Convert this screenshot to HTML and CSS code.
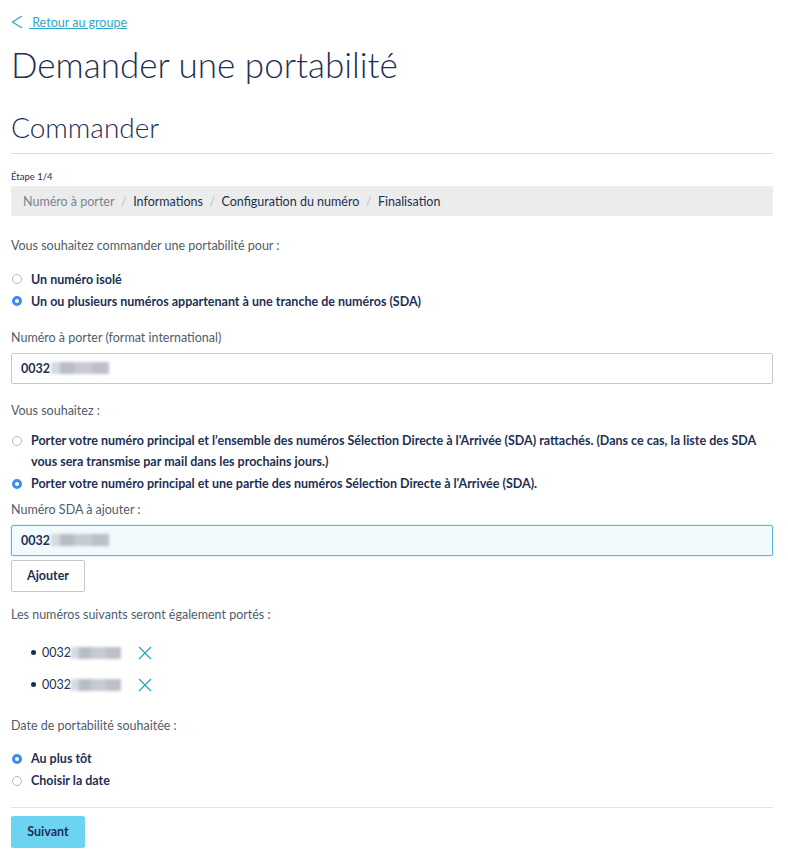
FILE: index.html
```html
<!DOCTYPE html>
<html lang="fr">
<head>
<meta charset="utf-8">
<title>Demander une portabilité</title>
<link rel="stylesheet" href="styles.css">
</head>
<body>
<main class="page">
  <a class="back" href="#">
    <svg class="back-icon" width="12" height="14" viewBox="0 0 12 14"><path d="M11 1 L1.5 7 L11 13" fill="none" stroke="#2ea8c8" stroke-width="1.3"/></svg>
    <span class="back-text">&nbsp;Retour au groupe</span>
  </a>
  <h1 class="title">Demander une portabilité</h1>
  <h2 class="subtitle">Commander</h2>

  <div class="step">Étape 1/4</div>
  <nav class="crumbs">
    <span class="crumb current">Numéro à porter</span>
    <span class="sep">/</span>
    <span class="crumb">Informations</span>
    <span class="sep">/</span>
    <span class="crumb">Configuration du numéro</span>
    <span class="sep">/</span>
    <span class="crumb">Finalisation</span>
  </nav>

  <p class="label q1">Vous souhaitez commander une portabilité pour :</p>
  <div class="radios r1">
    <div class="radio"><span class="dot"></span><span class="rtext">Un numéro isolé</span></div>
    <div class="radio"><span class="dot on"></span><span class="rtext">Un ou plusieurs numéros appartenant à une tranche de numéros (SDA)</span></div>
  </div>

  <p class="label q2">Numéro à porter (format international)</p>
  <div class="input"><span class="val">0032</span><span class="blur"></span></div>

  <p class="label q3">Vous souhaitez :</p>
  <div class="radios r2">
    <div class="radio"><span class="dot"></span><span class="rtext">Porter votre numéro principal et l’ensemble des numéros Sélection Directe à l'Arrivée (SDA) rattachés. (Dans ce cas, la liste des SDA vous sera transmise par mail dans les prochains jours.)</span></div>
    <div class="radio"><span class="dot on"></span><span class="rtext">Porter votre numéro principal et une partie des numéros Sélection Directe à l'Arrivée (SDA).</span></div>
  </div>

  <p class="label q4">Numéro SDA à ajouter :</p>
  <div class="input focus"><span class="val">0032</span><span class="blur"></span></div>
  <button class="btn">Ajouter</button>

  <p class="label q5">Les numéros suivants seront également portés :</p>
  <ul class="nums">
    <li class="num"><span class="bullet"></span><span class="ntext">0032</span><span class="blur small"></span>
      <svg class="x" width="14" height="14" viewBox="0 0 14 14"><path d="M1 1 L13 13 M13 1 L1 13" stroke="#2ea8c8" stroke-width="1.4" fill="none"/></svg></li>
    <li class="num"><span class="bullet"></span><span class="ntext">0032</span><span class="blur small"></span>
      <svg class="x" width="14" height="14" viewBox="0 0 14 14"><path d="M1 1 L13 13 M13 1 L1 13" stroke="#2ea8c8" stroke-width="1.4" fill="none"/></svg></li>
  </ul>

  <p class="label q6">Date de portabilité souhaitée :</p>
  <div class="radios r3">
    <div class="radio"><span class="dot on"></span><span class="rtext">Au plus tôt</span></div>
    <div class="radio"><span class="dot"></span><span class="rtext">Choisir la date</span></div>
  </div>

  <hr class="rule">
  <button class="btn primary">Suivant</button>
</main>
</body>
</html>
```

FILE: styles.css
```css
* { box-sizing: border-box; }
html, body { margin: 0; padding: 0; background: #fff; }
body {
  font-family: Lato, "Noto Sans", sans-serif;
  color: #1c3055;
  font-size: 13px;
}
.page {
  padding: 12px 15px 0 11px;
  display: flex;
  flex-direction: column;
}
.back {
  display: flex;
  align-items: center;
  gap: 6px;
  color: #2ea8c8;
  text-decoration: none;
  height: 20px;
  align-self: flex-start;
}
.back-text {
  text-decoration: underline;
  font-size: 12.5px;
}
.title {
  margin: 10px 0 0;
  font-weight: 300;
  font-size: 35px;
  line-height: 44px;
  color: #1c3055;
}
.subtitle {
  margin: 23px 0 0;
  font-weight: 300;
  font-size: 28px;
  line-height: 36px;
  color: #1c3055;
  padding-bottom: 8px;
  border-bottom: 1px solid #d8dcdf;
}
.step {
  margin-top: 17px;
  font-size: 9.5px;
  line-height: 12px;
}
.crumbs {
  margin-top: 3px;
  height: 30px;
  background: #ebeceb;
  border-radius: 2px;
  display: flex;
  align-items: center;
  padding-left: 12px;
  gap: 6.5px;
  font-size: 12.5px;
}
.crumb { color: #1c3055; }
.crumb.current { color: #7a8591; }
.sep { color: #c0c4c8; }
.label {
  margin: 0;
  color: #4f5d6b;
  font-size: 12.5px;
  line-height: 16px;
}
.q1 { margin-top: 22px; }
.q2 { margin-top: 18px; }
.q3 { margin-top: 19px; }
.q4 { margin-top: 7.5px; }
.q5 { margin-top: 15px; }
.q6 { margin-top: 23px; }
.radios { display: flex; flex-direction: column; gap: 1px; }
.r1 { margin-top: 14.5px; }
.r2 { margin-top: 11.5px; }
.r3 { margin-top: 14.5px; }
.radio {
  display: flex;
  align-items: flex-start;
  gap: 9px;
  font-weight: 700;
  font-size: 12.5px;
  line-height: 21px;
}
.dot {
  flex: none;
  width: 10px;
  height: 10px;
  margin-top: 5.5px;
  margin-left: 1px;
  border-radius: 50%;
  border: 1px solid #b5b8bc;
  background: #fff;
}
.dot.on {
  border: 3px solid #3d8bf0;
  background: #fff;
}
.input {
  margin-top: 7px;
  height: 31px;
  border: 1px solid #c6c8ca;
  border-radius: 2px;
  display: flex;
  align-items: center;
  padding-left: 9px;
  font-weight: 700;
  font-size: 12.5px;
}
.input.focus {
  border-color: #55bcd8;
  background: #f1fafd;
  box-shadow: 0 0 0 1px rgba(85, 188, 216, 0.15);
}
.blur {
  display: inline-block;
  width: 58px;
  height: 12px;
  margin-left: 1px;
  background: linear-gradient(90deg, #d6d9de 0 15%, #b8bcc4 15% 40%, #c7cad0 40% 70%, #bcc0c8 70% 100%);
  filter: blur(1.5px);
}
.val { color: #1c3055; }
.btn {
  align-self: flex-start;
  font-family: inherit;
  font-weight: 700;
  font-size: 12.5px;
  color: #1c3055;
  background: #fff;
  border: 1px solid #c6c8ca;
  border-radius: 2px;
  height: 32px;
  width: 74px;
  margin-top: 4px;
  padding: 0;
}
.btn.primary {
  background: #6cd3f1;
  border-color: #6cd3f1;
  margin-top: 8px;
  height: 32px;
}
.nums {
  list-style: none;
  margin: 20px 0 0;
  padding: 0 0 0 20px;
  display: flex;
  flex-direction: column;
  gap: 12px;
}
.num {
  display: flex;
  align-items: center;
  height: 20px;
  font-size: 12.5px;
}
.bullet {
  width: 5px;
  height: 5px;
  border-radius: 50%;
  background: #1c3055;
  margin-right: 6px;
}
.blur.small { width: 50px; margin-left: 0; }
.x { margin-left: 17px; }
.rule {
  margin: 15.5px 0 0;
  border: 0;
  border-top: 1px solid #e1e3e5;
  height: 0;
}
```
